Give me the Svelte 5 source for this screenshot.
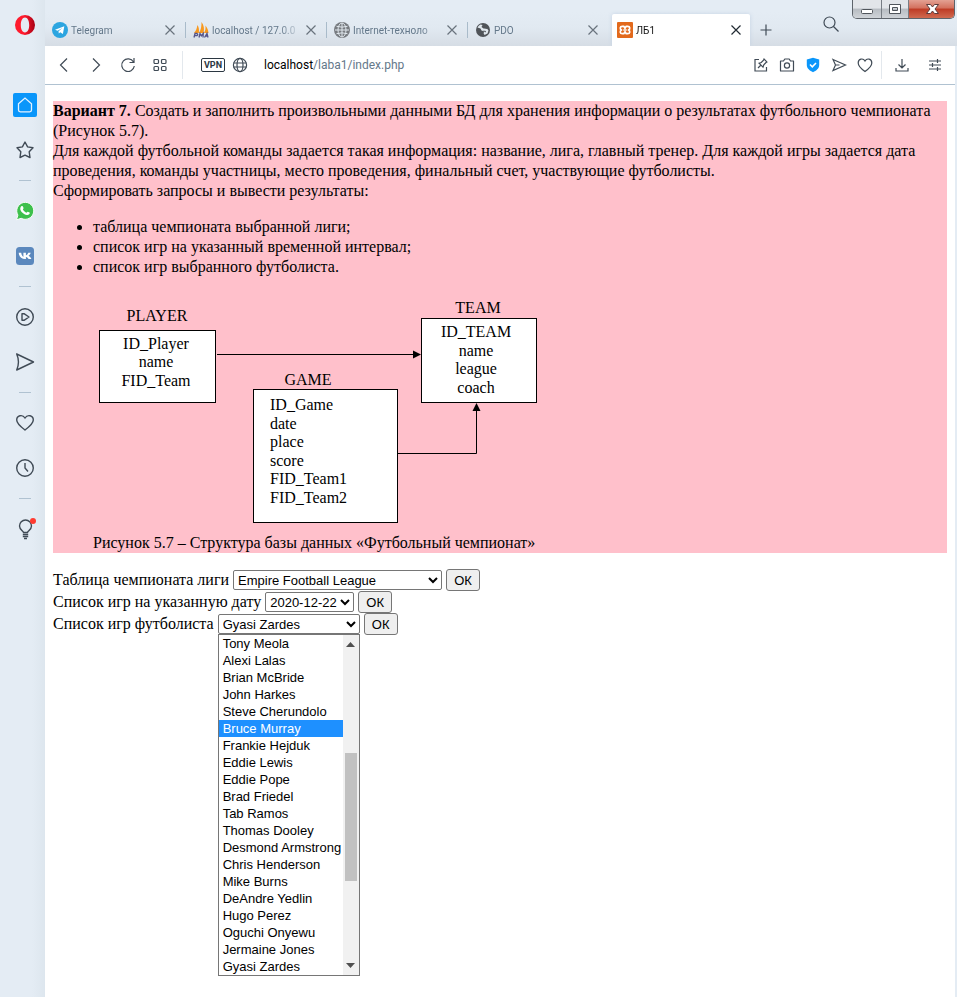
<script>
  const players = [
    'Tony Meola', 'Alexi Lalas', 'Brian McBride', 'John Harkes', 'Steve Cherundolo',
    'Bruce Murray', 'Frankie Hejduk', 'Eddie Lewis', 'Eddie Pope', 'Brad Friedel',
    'Tab Ramos', 'Thomas Dooley', 'Desmond Armstrong', 'Chris Henderson', 'Mike Burns',
    'DeAndre Yedlin', 'Hugo Perez', 'Oguchi Onyewu', 'Jermaine Jones', 'Gyasi Zardes'
  ];
  let player = $state('Gyasi Zardes');
  let hovered = $state('Bruce Murray');

  const tabs = [
    { title: 'Telegram', icon: 'telegram' },
    { title: 'localhost / 127.0.0', icon: 'pma' },
    { title: 'Internet-техноло', icon: 'globe' },
    { title: 'PDO', icon: 'earth' },
    { title: 'ЛБ1', icon: 'xampp', active: true }
  ];
</script>

{#snippet cross()}
  <svg width="12" height="12" viewBox="0 0 12 12"><path d="M1.5 1.5l9 9M10.5 1.5l-9 9" fill="none" stroke="currentColor" stroke-width="1.2" /></svg>
{/snippet}

{#snippet favicon(name)}
  <svg class="favicon" width="16" height="16" viewBox="0 0 16 16">
    {#if name === 'telegram'}
      <circle cx="8" cy="8" r="8" fill="#2ca5e0" />
      <path d="M3 7.8L12.3 4.2 10.9 12 8.2 10.2 6.8 11.6 6.5 9.2 10.4 5.9 5.6 8.8z" fill="#fff" />
    {:else if name === 'pma'}
      <path d="M1 11C3 9 4 6 4.400 3 6 5 6.300 8 5.800 11zM6 11C8 8 8.600 4 8.500 0 11 3 11.500 7 10.500 11zM11 11C12.500 9 12.700 6 12.500 3.500 14.500 6 15.300 8.500 15.500 11z" fill="#f8981d" />
      <path d="M1 15.500l1-4h2q1.500 1 0 2.200H2M6 15.500l1-4 1.300 2.300 2-2.300-.3 4M11.500 15.500l2.500-4 1 4M12.200 14h2.500" fill="none" stroke="#55558a" stroke-width="1.300" />
    {:else if name === 'globe'}
      <circle cx="8" cy="8" r="8" fill="#777b80" />
      <path d="M8 1v14M1 8h14M2.500 4.300Q8 6 13.500 4.300M2.500 11.700Q8 10 13.500 11.700" fill="none" stroke="#e1e8ee" stroke-width="1" />
      <ellipse cx="8" cy="8" rx="4" ry="7" fill="none" stroke="#e1e8ee" />
    {:else if name === 'earth'}
      <circle cx="8" cy="8" r="7" fill="#505459" />
      <path d="M2.500 5.500Q3.500 3.500 5.500 2.500L7.500 3 6.500 5 8.500 6.500 11.500 6 13.500 8.500 12.500 11.500 9.500 13 8.500 11 9.500 9.500 6.500 8.500 5.500 6.500z" fill="#e1e8ee" />
      <path d="M8 3.500l2.500-1 3 3-2 1.500L8.500 6zM8 8.500l3 .5-.5 1.500z" fill="#505459" />
    {:else}
      <rect width="16" height="16" rx="1" fill="#e2691c" />
      <path d="M8 6.200L6.800 4.300H5.300C2.800 4.300 2.600 7.300 4.600 8 2.600 8.700 2.800 11.700 5.300 11.700H6.800L8 9.800 9.200 11.700h1.500c2.500 0 2.700-3 .7-3.700 2-.7 1.800-3.700-.7-3.700H9.200zM6.300 8h3.400" fill="none" stroke="#fff" stroke-width="1.700" stroke-linejoin="round" />
    {/if}
  </svg>
{/snippet}

<div class="browser">
  <nav class="sidebar" aria-label="Боковая панель">
    <button class="opera" aria-label="Opera">
      <svg width="20" height="20" viewBox="0 0 20 20"><defs><linearGradient id="op"><stop offset="0.45" stop-color="#ff1b2d" /><stop offset="1" stop-color="#a70014" /></linearGradient></defs><path fill-rule="evenodd" fill="url(#op)" d="M10 0a10 10 0 100 20 10 10 0 000-20zm0 2.600c2.600 0 4.200 3.200 4.200 7.400s-1.600 7.400-4.200 7.400-4.200-3.200-4.200-7.400S7.400 2.600 10 2.600z" /></svg>
    </button>
    <button aria-label="Домой"><svg width="24" height="24" viewBox="0 0 24 24"><rect width="24" height="24" rx="2" fill="#0a96fa" /><path d="M5.500 10.800L12 5l6.500 5.800V17q0 1.800-1.800 1.800H7.300Q5.500 18.800 5.500 17z" fill="none" stroke="#e4f2ff" stroke-width="1.300" /></svg></button>
    <button aria-label="Закладки"><svg width="24" height="24" viewBox="0 0 24 24" class="line"><path d="M12 4l2.600 4.900 5.400.9-3.800 4 .8 5.700L12 17.100 7 19.500l.8-5.700-3.800-4 5.400-.9z" stroke-linejoin="round" /></svg></button>
    <i></i>
    <button aria-label="WhatsApp"><svg width="24" height="24" viewBox="0 0 24 24"><path d="M3.500 20.800l1.400-4.700a8.500 8.500 0 113.300 3.200z" fill="#3dc04c" stroke="#f9fcfa" stroke-width="1" /><path d="M8.300 7.300c1-.8 1.500-.3 2.200 1.600.2.600-.8 1.300-.6 1.700.8 1.500 1.800 2.400 3.400 3.100.5.100 1-1.200 1.500-1 .6.200 1.800.8 2 1.100.2 1.200-1.200 2.400-2.800 2.200-3.500-.6-6.200-3.100-6.700-5.700-.1-1.200.3-2.400 1-3z" fill="#fff" /></svg></button>
    <button aria-label="ВКонтакте"><svg width="24" height="24" viewBox="0 0 24 24"><rect x="3" y="3" width="18" height="18" rx="3.500" fill="#5b88bd" /><path d="M5 8.700h2.500c.3 2.300 1.500 4 2.200 4.200V8.700h2.500v2.600c.9-.1 2-1.500 2.400-2.600H17c-.3 1.400-1.300 2.500-2.200 3.100 1 .5 2.200 1.500 2.900 3.300H15c-.6-1.200-1.500-2-2.800-2.200v2.200h-.7C8 15.100 5.300 13 5 8.700z" fill="#fff" transform="translate(.7 0)" /></svg></button>
    <i></i>
    <button aria-label="Плеер"><svg width="24" height="24" viewBox="0 0 24 24" class="line"><circle cx="12" cy="12" r="8.300" /><path d="M9 8.700h2l5 3.300-5 3.300H9z" stroke-linejoin="round" /></svg></button>
    <button aria-label="Flow"><svg width="24" height="24" viewBox="0 0 24 24" class="line"><path d="M3.700 4L20.500 12 3.700 20q3.500-8 0-16z" stroke-linejoin="round" /></svg></button>
    <i></i>
    <button aria-label="Избранное"><svg width="24" height="24" viewBox="0 0 24 24" class="line"><path d="M12 19C8 16 3.700 12.500 3.700 9c0-4.700 5.800-6 8.300-2 2.500-4 8.300-2.700 8.300 2 0 3.500-4.300 7-8.300 10z" /></svg></button>
    <button aria-label="История"><svg width="24" height="24" viewBox="0 0 24 24" class="line"><circle cx="12" cy="12" r="8.300" /><path d="M12 7v5l3 3.500" /></svg></button>
    <i></i>
    <button aria-label="Советы"><svg width="24" height="24" viewBox="0 0 24 24" class="line"><path d="M10.500 15.500C10 14 6.500 12.500 6.500 9a6 6 0 0112 0c0 3.500-3.500 5-4 6.500zM9.800 17.500h5.400M9.800 19.500h5.400M11 21.500h3" /><circle cx="20" cy="4" r="3" fill="#ff3b30" stroke="none" /></svg></button>
  </nav>

  <div class="window">
    <header class="tabstrip">
      {#each tabs as tab}
        <div class="tab" class:active={tab.active}>
          {@render favicon(tab.icon)}
          <span class="title">{tab.title}</span>
          <button class="close" aria-label="Закрыть вкладку">{@render cross()}</button>
        </div>
      {/each}
      <button class="plus" aria-label="Новая вкладка"><svg width="12" height="12" viewBox="0 0 12 12"><path d="M6 .5v11M.5 6h11" stroke="#404b56" stroke-width="1.200" /></svg></button>
      <button class="search" aria-label="Поиск"><svg width="16" height="16" viewBox="0 0 16 16" class="line"><circle cx="6.500" cy="6.500" r="5.500" /><path d="M10.500 10.500l5 5" /></svg></button>
      <div class="controls">
        <button aria-label="Свернуть"><svg width="28" height="18" viewBox="0 0 28 18"><rect x="8.500" y="9.500" width="11" height="4" rx="1" fill="#fff" stroke="#50555b" /></svg></button>
        <button aria-label="Развернуть"><svg width="26" height="18" viewBox="0 0 26 18"><path fill-rule="evenodd" d="M7.500 4.500h11v9h-11zM10.500 7.500h5v3h-5z" fill="#fff" stroke="#50555b" /></svg></button>
        <button class="quit" aria-label="Закрыть"><svg width="45" height="18" viewBox="0 0 45 18"><path d="M17.500 4.500h4l2 2.500 2-2.500h4L26 9l3.500 4.500h-4l-2-2.500-2 2.500h-4L21 9z" fill="#fff" stroke="#5b3a3a" /></svg></button>
      </div>
    </header>

    <div class="view">
      <div class="toolbar">
        <div class="nav">
          <button aria-label="Назад"><svg width="16" height="16" viewBox="0 0 16 16" class="line"><path d="M11 1.500L4.500 8l6.500 6.500" /></svg></button>
          <button aria-label="Вперёд"><svg width="16" height="16" viewBox="0 0 16 16" class="line"><path d="M5 1.500L11.500 8 5 14.500" /></svg></button>
          <button aria-label="Обновить"><svg width="16" height="16" viewBox="0 0 16 16" class="line"><path d="M13.500 5A6.300 6.300 0 1014.300 9M14 1v4.500H9.500" /></svg></button>
          <button aria-label="Экспресс-панель"><svg width="16" height="16" viewBox="0 0 16 16" class="line"><rect x="2" y="2.500" width="4.500" height="4" rx="1" /><rect x="9.500" y="2.500" width="4.500" height="4" rx="1" /><rect x="2" y="9.500" width="4.500" height="4" rx="1" /><rect x="9.500" y="9.500" width="4.500" height="4" rx="1" /></svg></button>
        </div>
        <div class="address">
          <button class="vpn">VPN</button>
          <svg width="16" height="16" viewBox="0 0 16 16" class="line"><circle cx="8" cy="8" r="6.600" /><ellipse cx="8" cy="8" rx="3" ry="6.600" /><path d="M1.500 6h13M1.500 10h13" /></svg>
          <span class="url"><b>localhost</b>/laba1/index.php</span>
        </div>
        <div class="actions">
          <button aria-label="Снимок страницы"><svg width="16" height="16" viewBox="0 0 16 16" class="line"><path d="M6 2.500H2v11.500h11.500V10M5 11l3-3M6 6.200l4 4 .8-2.400L13.500 5l.8.300L10.700 1.700l.3 1L8.300 5.500z" /></svg></button>
          <button aria-label="Скриншот"><svg width="16" height="16" viewBox="0 0 16 16" class="line"><path d="M1.500 4h3l1.300-2h4.400l1.300 2h3v10h-13z" stroke-linejoin="round" /><circle cx="8" cy="8.500" r="2.600" /></svg></button>
          <button aria-label="Блокировка рекламы"><svg width="16" height="16" viewBox="0 0 16 16"><path d="M8 .8l6.200 1.800V8c0 3.500-3 5.700-6.200 7.200C4.800 13.700 1.800 11.500 1.800 8V2.600z" fill="#0a96fa" /><path d="M5 7.500l2.300 2.300L11 6" fill="none" stroke="#fff" stroke-width="1.600" /></svg></button>
          <button aria-label="Отправить"><svg width="16" height="16" viewBox="0 0 16 16" class="line"><path d="M2 2.500L14.500 8 2 13.500 4.500 8zM4.500 8h4" /></svg></button>
          <button aria-label="В избранное"><svg width="16" height="16" viewBox="0 0 16 16" class="line"><path d="M8 14.500C4.500 12 1.200 9.500 1.200 6c0-4.500 5-5.200 6.800-2 1.800-3.200 6.800-2.500 6.800 2 0 3.500-3.300 6-6.800 8.500z" /></svg></button>
        </div>
        <div class="menu">
          <button aria-label="Загрузки"><svg width="16" height="16" viewBox="0 0 16 16" class="line"><path d="M8 2v9M4.500 7.500L8 11l3.500-3.500M2 11v3h12v-3" /></svg></button>
          <button aria-label="Простая настройка"><svg width="16" height="16" viewBox="0 0 16 16" class="line"><path d="M2 4h12M2 8h12M2 12h12M10.500 2v4M5.500 6v4M10.500 10v4" /></svg></button>
        </div>
      </div>

      <main>
        <section class="task">
          <p><b>Вариант 7.</b> Создать и заполнить произвольными данными БД для хранения информации о результатах футбольного чемпионата (Рисунок 5.7).</p>
          <p>Для каждой футбольной команды задается такая информация: название, лига, главный тренер. Для каждой игры задается дата проведения, команды участницы, место проведения, финальный счет, участвующие футболисты.</p>
          <p>Сформировать запросы и вывести результаты:</p>
          <ul>
            <li>таблица чемпионата выбранной лиги;</li>
            <li>список игр на указанный временной интервал;</li>
            <li>список игр выбранного футболиста.</li>
          </ul>
          <figure>
            <svg class="schema" width="460" height="240" viewBox="0 0 460 240">
              <g fill="#fff" stroke="#000">
                <rect x="6.500" y="37.500" width="116" height="72" />
                <rect x="160.500" y="96.500" width="144" height="133" />
                <rect x="328.500" y="25.500" width="115" height="84" />
                <path d="M124 61.500H321M305 160.500H383.500V117" fill="none" />
              </g>
              <path d="M328 61.500l-8-4v8zM383.500 110l-4 8h8z" />
              <g text-anchor="middle">
                <text x="64" y="28">PLAYER</text>
                <text x="63" y="56">ID_Player</text>
                <text x="63" y="74">name</text>
                <text x="63" y="93">FID_Team</text>
                <text x="215" y="92">GAME</text>
                <text x="385" y="20">TEAM</text>
                <text x="383" y="44">ID_TEAM</text>
                <text x="383" y="63">name</text>
                <text x="383" y="81">league</text>
                <text x="383" y="100">coach</text>
              </g>
              <text x="177" y="117">ID_Game</text>
              <text x="177" y="136">date</text>
              <text x="177" y="154">place</text>
              <text x="177" y="173">score</text>
              <text x="177" y="191">FID_Team1</text>
              <text x="177" y="210">FID_Team2</text>
            </svg>
            <figcaption>Рисунок 5.7 – Структура базы данных «Футбольный чемпионат»</figcaption>
          </figure>
        </section>

        <form onsubmit={(e) => e.preventDefault()}>
          <label for="league">Таблица чемпионата лиги</label>
          <select id="league" class="league"><option>Empire Football League</option></select>
          <button>ОК</button>
        </form>
        <form onsubmit={(e) => e.preventDefault()}>
          <label for="date">Список игр на указанную дату</label>
          <select id="date" class="date"><option>2020-12-22</option></select>
          <button>ОК</button>
        </form>
        <form onsubmit={(e) => e.preventDefault()}>
          <label for="player">Список игр футболиста</label>
          <div class="combo">
            <select id="player" class="player" bind:value={player}>
              {#each players as name}<option>{name}</option>{/each}
            </select>
            <div class="popup">
              <ul role="listbox" aria-label="Футболисты">
                {#each players as name}
                  <li role="option" aria-selected={name === hovered} class:hot={name === hovered} onmouseenter={() => (hovered = name)}>{name}</li>
                {/each}
              </ul>
              <div class="scroll">
                <svg width="9" height="5" viewBox="0 0 9 5"><path d="M0 5l4.500-5L9 5z" fill="#505050" /></svg>
                <span></span>
                <svg width="9" height="5" viewBox="0 0 9 5"><path d="M0 0l4.500 5L9 0z" fill="#505050" /></svg>
              </div>
            </div>
          </div>
          <button>ОК</button>
        </form>
      </main>
    </div>
  </div>
</div>

<style>
  :global(body) { margin: 0; background: #e4ecf4; }
  svg { display: block; flex: none; }
  .line { fill: none; stroke: #404b56; stroke-width: 1.2; }
  .browser { display: flex; min-height: 100vh; font-family: Roboto, "Liberation Sans", sans-serif; }
  .browser button { font-family: inherit; }

  .sidebar { width: 45px; flex: none; display: flex; flex-direction: column; background: linear-gradient(90deg, #e4ecf4 32px, #dde6ee); }
  .sidebar button, .nav button, .actions button, .menu button, .plus, .search, .close { border: 0; padding: 0; background: none; display: flex; align-items: center; justify-content: center; }
  .sidebar button { height: 45px; padding-left: 5px; }
  .sidebar .line { stroke-width: 1.4; }
  .sidebar .opera { height: 50px; margin-bottom: 32px; }
  .sidebar i { width: 12px; height: 1px; margin: 8px 0 7px 19px; background: #b0c2d1; }

  .window { flex: 1; min-width: 0; display: flex; flex-direction: column; }
  .tabstrip { height: 46px; display: flex; align-items: flex-end; background: linear-gradient(#e4ecf4 12px, #e1e9f1 28px, #d6dde5); }
  .tab { box-sizing: border-box; flex: 0 1 141px; min-width: 0; height: 32px; padding: 0 10px 0 7px; display: flex; align-items: center; gap: 3px; position: relative; font-size: 10px; color: #64788a; }
  .tab:not(.active)::after { content: ""; position: absolute; right: 0; top: 8px; width: 1px; height: 16px; background: #a9bbca; }
  .tab:nth-child(4)::after { display: none; }
  .title { flex: 1; overflow: hidden; white-space: nowrap; line-height: 16px; padding-top: 2px; mask-image: linear-gradient(90deg, #000 75%, transparent); }
  .close { color: #69737d; }
  .active { flex-basis: 138px; margin-left: 3px; padding: 0 8px 0 5px; background: #fff; color: #111; border-radius: 2px 2px 0 0; box-shadow: 0 0 4px #c5d3e4; clip-path: inset(-4px -4px 0 -4px); }
  .active .close { color: #222b33; }
  .plus { width: 32px; height: 32px; }
  .search { width: 24px; height: 24px; margin: 0 9px 10px auto; }
  .controls { align-self: flex-start; display: flex; margin-right: 2px; border: 1px solid #5e646b; border-top: 0; border-radius: 0 0 5px 5px; overflow: hidden; }
  .controls button { padding: 0; border: 0; border-right: 1px solid #777d84; background: linear-gradient(#e2e5e9 45%, #b7bcc2 50%, #d0d4d8); }
  .controls .quit { border: 0; background: linear-gradient(#e3a193, #d3705d 45%, #be3b25 50%, #d06a50); }

  .view { flex: 1; margin-right: 2px; background: #fff; }
  .toolbar { height: 38px; display: flex; align-items: center; border-bottom: 1px solid #b0c2d1; }
  .nav, .actions, .menu { display: flex; }
  .nav { gap: 16px; padding: 0 14px 0 11px; }
  .address { flex: 1; min-width: 0; height: 28px; display: flex; align-items: center; gap: 7px; padding-left: 18px; border-left: 1px solid #e3e8ed; }
  .vpn { box-sizing: border-box; width: 24px; height: 14px; padding: 0; border: 1px solid #2b3742; border-radius: 2px; background: #fff; color: #2b3742; font-size: 9px; font-weight: 700; line-height: 12px; }
  .url { margin-left: 9px; font-size: 12px; color: #64788a; }
  .url b { font-weight: 400; color: #000; }
  .actions { gap: 10px; padding-right: 8px; }
  .menu { gap: 17px; height: 28px; padding: 0 12px; border-left: 1px solid #e3e8ed; }

  main { padding: 16px 8px; font: 16px/20px "Liberation Serif", serif; color: #000; }
  .task { background: #ffc0cb; margin-bottom: 16px; }
  .task p { margin: 0; }
  .task ul { margin: 16px 0; padding-left: 40px; }
  figure { margin: 0 40px; }
  .schema { max-width: 100%; }
  form { height: 22px; display: flex; align-items: center; gap: 4px; }
  select, .browser form button, .popup { font-family: "Liberation Sans", Arial, sans-serif; font-size: 13px; }
  select { box-sizing: border-box; height: 20px; margin: 0; padding: 0; border: 1px solid #767676; border-radius: 2px; background-color: #fff; color: #000; }
  .league { width: 209px; }
  .date { width: 89px; }
  .player { width: 100%; display: block; }
  .browser form button { box-sizing: border-box; width: 34px; height: 22px; padding: 0; border: 1px solid #767676; border-radius: 3px; background: #efefef; color: #000; }
  .combo { position: relative; width: 142px; }
  .popup { position: absolute; top: 100%; left: 0; right: 0; display: flex; border: 1px solid #767676; background: #fff; }
  .popup ul { flex: 1; margin: 0; padding: 0; list-style: none; }
  .popup li { padding-left: 4px; line-height: 17px; white-space: nowrap; }
  .popup .hot { background: #1e90ff; color: #fff; }
  .scroll { width: 16px; display: flex; flex-direction: column; align-items: center; justify-content: space-between; padding: 7px 0; box-sizing: border-box; background: #f1f1f1; }
  .scroll span { width: 12px; height: 128px; margin-top: 24px; background: #c1c1c1; }
</style>
